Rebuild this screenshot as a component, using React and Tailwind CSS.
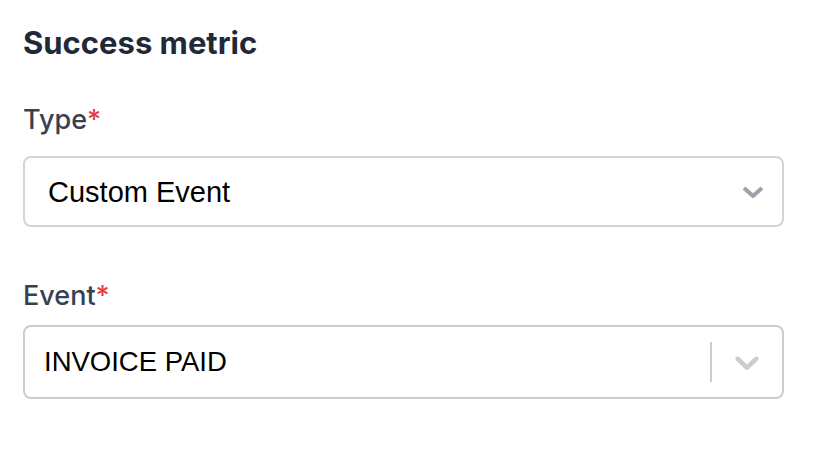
import React from 'react'

const Label = ({ children, className = '' }) => (
  <div className={`text-[27px] leading-[32px] font-medium text-[#374151] ${className}`}>
    {children}
    <span className="text-[#e53e3e]">*</span>
  </div>
)

export default function App() {
  return (
    <div
      className="w-[816px] h-[450px] bg-white pl-[23px] pr-[32px] pt-[23px]"
      style={{ fontFamily: 'Inter, "Noto Sans", sans-serif' }}
    >
      <h2 className="text-[31px] leading-[40px] font-bold text-[#1f2937]">Success metric</h2>

      <Label className="mt-[41px]">Type</Label>

      {/* native-looking select */}
      <div className="mt-[20px] h-[71px] border-2 border-[#d1d5db] rounded-[8px] flex items-center justify-between pl-[23px] pr-[17px] pt-[3px]">
        <span className="text-[29px] text-black" style={{ fontFamily: '"Liberation Sans", Arial, sans-serif' }}>
          Custom Event
        </span>
        <svg width="24" height="14" viewBox="0 0 24 14" className="mb-[3px]">
          <polyline points="3,3 12,11 21,3" fill="none" stroke="#9ca3af" strokeWidth="4" strokeLinejoin="round" />
        </svg>
      </div>

      <Label className="mt-[53px]">Event</Label>

      {/* react-select style */}
      <div className="mt-[13px] h-[74px] border-2 border-[#cccccc] rounded-[8px] flex items-stretch">
        <div className="flex-1 flex items-center pl-[19px]">
          <span className="text-[27.5px] text-black" style={{ fontFamily: '"Liberation Sans", Arial, sans-serif' }}>
            INVOICE PAID
          </span>
        </div>
        <div className="w-[2px] bg-[#cccccc] my-[15px]" />
        <div className="flex items-center px-[15px]">
          <svg width="40" height="40" viewBox="0 0 20 20" fill="#cccccc">
            <path d="M4.516 7.548c0.436-0.446 1.043-0.481 1.576 0l3.908 3.747 3.908-3.747c0.533-0.481 1.141-0.446 1.574 0 0.436 0.445 0.408 1.197 0 1.615-0.406 0.418-4.695 4.502-4.695 4.502-0.217 0.223-0.502 0.335-0.787 0.335s-0.57-0.112-0.789-0.335c0 0-4.287-4.084-4.695-4.502s-0.436-1.17 0-1.615z" />
          </svg>
        </div>
      </div>
    </div>
  )
}
